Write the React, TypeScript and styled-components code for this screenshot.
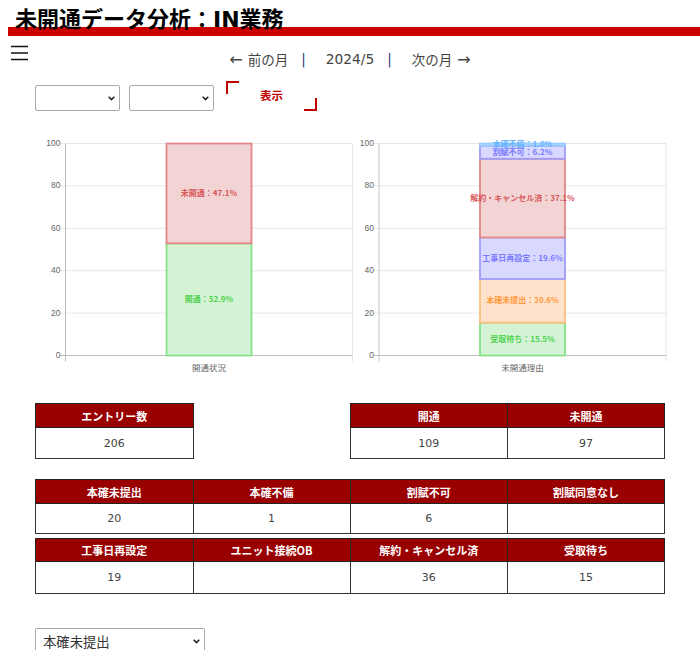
import React from "react";
import styled, { createGlobalStyle } from "styled-components";

const FONT = `"DejaVu Sans", "Noto Sans CJK JP", sans-serif`;
const JP = `"Noto Sans CJK JP", "Liberation Sans", sans-serif`;
const CHEVRON = `data:image/svg+xml,%3Csvg xmlns='http://www.w3.org/2000/svg' width='7' height='5' viewBox='0 0 7 5'%3E%3Cpath d='M.7 .8 3.5 3.6 6.3 .8' fill='none' stroke='%23222' stroke-width='1.6'/%3E%3C/svg%3E`;

const Global = createGlobalStyle`
  html, body { margin: 0; padding: 0; background: #fff; overflow-x: hidden; }
  body { font-family: ${FONT}; color: #444; }
`;

const Page = styled.div`
  width: 700px;
  padding-bottom: 40px;
`;
const TitleBar = styled.h1`
  margin: 0 0 0 8px;
  padding: 8px 0 0 7px;
  box-sizing: border-box;
  height: 36px;
  border-bottom: 9px solid #cc0000;
  font-family: ${FONT};
  font-size: 22px;
  line-height: 24px;
  font-weight: 700;
  color: #000;
  white-space: nowrap;
`;
const TopRow = styled.div`
  display: grid;
  grid-template-columns: 1fr auto 1fr;
  height: 45px;
`;
const Burger = styled.svg`
  display: block;
  margin: 9px 0 0 11px;
  width: 18px;
  height: 18px;
`;
const MonthNav = styled.nav`
  display: flex;
  align-items: center;
  height: 20px;
  margin-top: 13px;
  font-family: ${FONT};
  font-size: 13.5px;
  color: #444;
  white-space: nowrap;
`;
const NavLink = styled.a`
  color: #444;
  text-decoration: none;
`;
const NavArrow = styled.span<{ $side: "l" | "r" }>`
  font-size: 16px;
  line-height: 1;
  margin: ${(p) => (p.$side === "l" ? "0 5px 0 0" : "0 0 0 5px")};
`;
const NavDate = styled.span`
  font-size: 13.8px;
`;
const NavSep = styled.span`
  color: #2a3a7a;
  margin: 0 20px 0 13px;
`;
const FilterRow = styled.div`
  display: flex;
  align-items: flex-end;
  height: 30px;
  padding-left: 35px;
`;
const PickerSelect = styled.select<{ $w: number; $h: number; $size: number }>`
  appearance: none;
  width: ${(p) => p.$w}px;
  height: ${(p) => p.$h}px;
  box-sizing: border-box;
  font-family: ${JP};
  font-size: ${(p) => p.$size}px;
  color: #333;
  background: #fff url("${CHEVRON}") no-repeat right 4px center;
  border: 1px solid #a9a9a9;
  border-radius: 2px;
  padding: 0 14px 0 7px;
`;
const PickerGap = styled.div`
  width: 9px;
`;
const ShowButton = styled.button`
  position: relative;
  width: 91px;
  height: 30px;
  margin-left: 12px;
  padding: 0 0 2px;
  background: transparent;
  border: 0;
  color: #c00000;
  font-family: ${JP};
  font-size: 11.5px;
  font-weight: 700;
  &::before,
  &::after {
    content: "";
    position: absolute;
    width: 11px;
    height: 11px;
    border: 0 solid #c00000;
  }
  &::before {
    left: 0;
    top: 0;
    border-width: 2px 0 0 2px;
  }
  &::after {
    right: 0;
    bottom: 0;
    border-width: 0 2px 2px 0;
  }
`;
const ChartRow = styled.div`
  display: flex;
  margin: 23px 0 0 35px;
  height: 240px;
`;
const ChartSvg = styled.svg`
  display: block;
  flex: none;
  overflow: visible;
  width: 315px;
  height: 240px;
`;
const TickLabel = styled.text`
  font-family: "Liberation Sans", sans-serif;
  font-size: 8.5px;
  fill: #666;
`;
const AxisTitle = styled.text`
  font-family: ${JP};
  font-size: 8.5px;
  fill: #666;
  text-anchor: middle;
`;
const BarLabel = styled.text`
  font-family: ${JP};
  font-size: 8px;
  font-weight: 700;
  text-anchor: middle;
`;
const Tables = styled.div`
  margin: 29px 35px 0;
  width: 630px;
`;
const StatTable = styled.table<{ $gap: number }>`
  width: 630px;
  table-layout: fixed;
  border-collapse: collapse;
  margin-bottom: ${(p) => p.$gap}px;
  tr > :nth-child(odd) {
    width: 156.5px;
  }
  tr > :nth-child(even) {
    width: 156px;
  }
`;
const HeadCell = styled.th<{ $h: number }>`
  height: ${(p) => p.$h}px;
  padding: 0;
  background: #990000;
  color: #fff;
  border: 1px solid #222;
  font-family: ${JP};
  font-size: 11px;
  font-weight: 700;
  text-align: center;
`;
const ValueCell = styled.td<{ $h: number }>`
  height: ${(p) => p.$h}px;
  padding: 0;
  border: 1px solid #333;
  color: #444;
  font-size: 11px;
  text-align: center;
`;
const BlankCell = styled.td`
  padding: 0;
  border: 0;
`;
const BottomPicker = styled.div`
  margin: 34px 0 0 35px;
`;

type Seg = { from: number; to: number; fill: string; line: string; text: string; label: string };
const RED = { fill: "#f3d4d4", line: "#e28787", text: "#d9575c" };
const GREEN = { fill: "#d4f3d4", line: "#87e287", text: "#4fd24f" };
const ORANGE = { fill: "#ffe2cc", line: "#ffbe80", text: "#ff9a3c" };
const VIOLET = { fill: "#d9d9ff", line: "#9d9dff", text: "#7a7aff" };
const SKY = { fill: "#cce6ff", line: "#99ccff", text: "#66b3ff" };

const left: Seg[] = [
  { from: 0, to: 52.9, ...GREEN, label: "開通：52.9%" },
  { from: 52.9, to: 100, ...RED, label: "未開通：47.1%" },
];
const right: Seg[] = [
  { from: 0, to: 15.5, ...GREEN, label: "受取待ち：15.5%" },
  { from: 15.5, to: 36.1, ...ORANGE, label: "本確未提出：20.6%" },
  { from: 36.1, to: 55.7, ...VIOLET, label: "工事日再設定：19.6%" },
  { from: 55.7, to: 92.8, ...RED, label: "解約・キャンセル済：37.1%" },
  { from: 92.8, to: 99, ...VIOLET, label: "割賦不可：6.2%" },
  { from: 99, to: 100, ...SKY, label: "本確不備：1.0%" },
];

const Y0 = 221.5;
const UNIT = 2.12;
const yOf = (v: number) => Y0 - v * UNIT;

function Chart({ x0, segs, title, soft }: { x0: number; segs: Seg[]; title: string; soft?: boolean }) {
  const x1 = x0 + 287;
  const mid = x0 + 143.5;
  const bl = mid - 42.5;
  return (
    <ChartSvg viewBox="0 0 315 240">
      {[20, 40, 60, 80, 100].map((v) => (
        <line key={v} x1={x0 - 5} x2={x1} y1={yOf(v)} y2={yOf(v)} stroke="#e6e6e6" />
      ))}
      <line
        x1={x0}
        x2={x0}
        y1={yOf(100)}
        y2={Y0 + 6}
        stroke={soft ? "#dcdcdc" : "#bdbdbd"}
        strokeWidth={soft ? 1.6 : 1}
      />
      <line x1={x1} x2={x1} y1={yOf(100)} y2={Y0 + 6} stroke="#e6e6e6" />
      <line x1={x0 - 5} x2={x1} y1={Y0} y2={Y0} stroke="#bdbdbd" />
      {[0, 20, 40, 60, 80, 100].map((v) => (
        <TickLabel key={v} x={x0 - 5} y={yOf(v) + 2.5} textAnchor="end">
          {v}
        </TickLabel>
      ))}
      {segs.map((s) => (
        <rect
          key={s.label}
          x={bl}
          y={yOf(s.to)}
          width={85}
          height={(s.to - s.from) * UNIT}
          fill={s.fill}
          stroke={s.line}
          strokeWidth={1.8}
        />
      ))}
      {segs.map((s) => (
        <BarLabel key={s.label} x={mid} y={yOf((s.from + s.to) / 2) + 2.5} fill={s.text}>
          {s.label}
        </BarLabel>
      ))}
      <AxisTitle x={mid} y={Y0 + 15}>
        {title}
      </AxisTitle>
    </ChartSvg>
  );
}

function Row({
  heads,
  values,
  gap,
  headH,
  valueH,
}: {
  heads: (string | null)[];
  values: string[];
  gap: number;
  headH: number;
  valueH: number;
}) {
  return (
    <StatTable $gap={gap}>
      <tbody>
        <tr>
          {heads.map((h, i) =>
            h === null ? (
              <BlankCell key={i} />
            ) : (
              <HeadCell key={i} $h={headH}>
                {h}
              </HeadCell>
            ),
          )}
        </tr>
        <tr>
          {values.map((v, i) =>
            heads[i] === null ? (
              <BlankCell key={i} />
            ) : (
              <ValueCell key={i} $h={valueH}>
                {v}
              </ValueCell>
            ),
          )}
        </tr>
      </tbody>
    </StatTable>
  );
}

export default function App() {
  return (
    <Page>
      <Global />
      <TitleBar>未開通データ分析：IN業務</TitleBar>
      <TopRow>
        <Burger viewBox="0 0 18 18">
          <path d="M0 1.5h17M0 8h17M0 14.5h17" stroke="#111" strokeWidth="1.4" fill="none" />
        </Burger>
        <MonthNav>
          <NavLink href="#">
            <NavArrow $side="l">←</NavArrow>前の月
          </NavLink>
          <NavSep>|</NavSep>
          <NavDate>2024/5</NavDate>
          <NavSep>|</NavSep>
          <NavLink href="#">
            次の月<NavArrow $side="r">→</NavArrow>
          </NavLink>
        </MonthNav>
        <div />
      </TopRow>
      <FilterRow>
        <PickerSelect $w={85} $h={26} $size={13}>
          <option></option>
        </PickerSelect>
        <PickerGap />
        <PickerSelect $w={85} $h={26} $size={13}>
          <option></option>
        </PickerSelect>
        <ShowButton>表示</ShowButton>
      </FilterRow>
      <ChartRow>
        <Chart x0={30.5} segs={left} title="開通状況" />
        <Chart x0={29} segs={right} title="未開通理由" soft />
      </ChartRow>
      <Tables>
        <Row heads={["エントリー数", null, "開通", "未開通"]} values={["206", "", "109", "97"]} gap={20} headH={23} valueH={30} />
        <Row heads={["本確未提出", "本確不備", "割賦不可", "割賦同意なし"]} values={["20", "1", "6", ""]} gap={4} headH={23} valueH={29} />
        <Row heads={["工事日再設定", "ユニット接続OB", "解約・キャンセル済", "受取待ち"]} values={["19", "", "36", "15"]} gap={0} headH={22} valueH={31} />
      </Tables>
      <BottomPicker>
        <PickerSelect $w={170} $h={26} $size={13.33}>
          <option>本確未提出</option>
        </PickerSelect>
      </BottomPicker>
    </Page>
  );
}
